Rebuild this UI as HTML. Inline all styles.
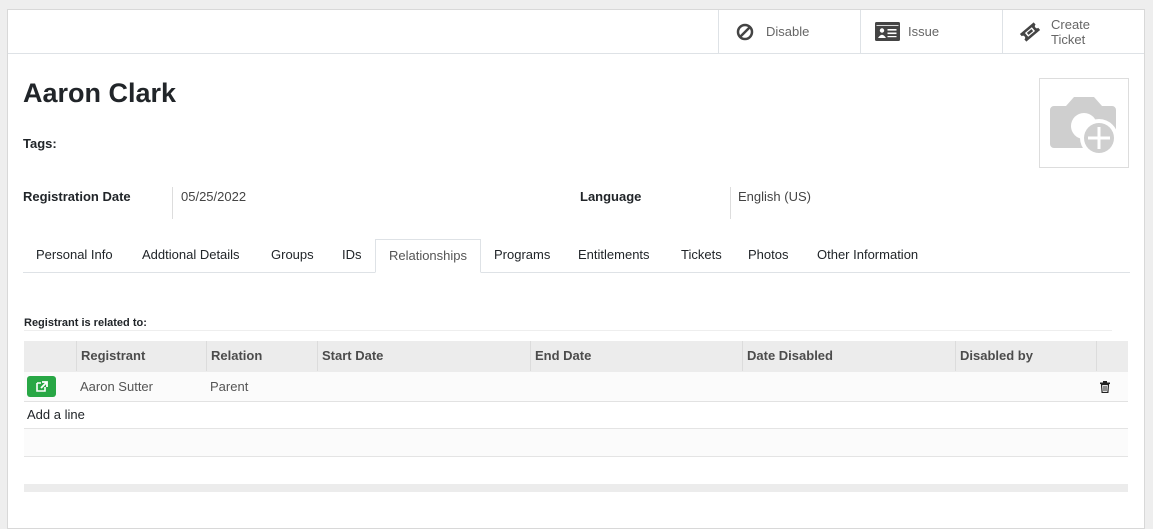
<!DOCTYPE html>
<html><head><style>
body{margin:0;width:1153px;height:519px;background:#eeeeee;font-family:"Liberation Sans",sans-serif;color:#212529;overflow:hidden;position:relative}
.card{position:absolute;left:7px;top:9px;width:1138px;height:520px;background:#fff;border:1px solid #d8d8d8;box-sizing:border-box}
.bar{position:absolute;left:0;top:0;width:1136px;height:43px;border-bottom:1px solid #dee2e6}
.btn{position:absolute;top:0;height:43px;border-left:1px solid #dee2e6;color:#666;font-size:13px;display:flex;align-items:center}
.abs{position:absolute}
.tabs{position:absolute;left:15px;top:229px;width:1107px;height:33px;border-bottom:1px solid #dee2e6}
.tab{position:absolute;top:0;height:33px;line-height:32px;font-size:13px;color:#212529}
.th{position:absolute;top:0;height:30px;line-height:30px;font-size:13px;font-weight:bold;color:#4c4c4c;border-left:1px solid #dcdcdc;padding-left:4px;box-sizing:border-box}
</style></head><body>
<div class="card">
 <div class="bar">
  <div class="btn" style="left:710px;width:142px"><svg style="margin-left:17px" width="18" height="18" viewBox="0 0 18 18"><circle cx="9" cy="9" r="7" fill="none" stroke="#444" stroke-width="2.5"/><line x1="4.5" y1="13.5" x2="13.5" y2="4.5" stroke="#444" stroke-width="2.5"/></svg><span style="margin-left:12px">Disable</span></div>
  <div class="btn" style="left:852px;width:142px"><svg style="margin-left:14px" width="25" height="19" viewBox="0 0 25 19"><rect x="0" y="0" width="25" height="19" rx="1.5" fill="#444"/><rect x="1.5" y="3" width="22" height="0.8" fill="#fff"/><circle cx="7" cy="8.5" r="2.2" fill="#fff"/><path d="M3 16 Q7 9.5 11 16Z" fill="#fff"/><rect x="12.5" y="7" width="9" height="1.6" fill="#fff"/><rect x="12.5" y="10.5" width="9" height="1.6" fill="#fff"/><rect x="12.5" y="14" width="9" height="1.2" fill="#fff"/></svg><span style="margin-left:8px">Issue</span></div>
  <div class="btn" style="left:994px;width:142px"><svg style="margin-left:16px" width="22" height="20" viewBox="0 0 22 20"><g transform="rotate(-40 11 10)"><path d="M2 5 h18 v3 a2 2 0 0 0 0 4 v3 h-18 v-3 a2 2 0 0 0 0 -4z" fill="#444"/><rect x="6.5" y="7.5" width="9" height="5" fill="#fff"/><rect x="8" y="8.7" width="6" height="2.6" fill="#444"/></g></svg><span style="margin-left:10px;line-height:15px">Create<br>Ticket</span></div>
 </div>
 <div class="abs" style="left:15px;top:68px;font-size:27px;font-weight:bold;color:#212529">Aaron Clark</div>
 <div class="abs" style="left:15px;top:126px;font-size:13px;font-weight:bold">Tags:</div>
 <div class="abs" style="left:1031px;top:68px;width:90px;height:90px;border:1px solid #ddd;box-sizing:border-box">
  <svg width="88" height="88" viewBox="0 0 88 88"><path d="M14 27 h12 l8 -9 h20 l8 9 h10 a4 4 0 0 1 4 4 v34 a4 4 0 0 1 -4 4 h-58 a4 4 0 0 1 -4 -4 v-34 a4 4 0 0 1 4 -4z" fill="#cfcfcf"/><circle cx="44" cy="47" r="13" fill="#fff"/><circle cx="59" cy="59" r="19" fill="#fff"/><circle cx="59" cy="59" r="15" fill="#cfcfcf"/><rect x="57.5" y="48" width="3" height="22" fill="#fff"/><rect x="48" y="57.5" width="22" height="3" fill="#fff"/></svg>
 </div>
 <div class="abs" style="left:15px;top:179px;font-size:13px;font-weight:bold">Registration Date</div>
 <div class="abs" style="left:164px;top:177px;height:32px;border-left:1px solid #ddd"></div>
 <div class="abs" style="left:173px;top:179px;font-size:13px;color:#444">05/25/2022</div>
 <div class="abs" style="left:572px;top:179px;font-size:13px;font-weight:bold">Language</div>
 <div class="abs" style="left:722px;top:177px;height:32px;border-left:1px solid #ddd"></div>
 <div class="abs" style="left:730px;top:179px;font-size:13px;color:#444">English (US)</div>
 <div class="tabs">
  <div class="tab" style="left:13px">Personal Info</div>
  <div class="tab" style="left:119px">Addtional Details</div>
  <div class="tab" style="left:248px">Groups</div>
  <div class="tab" style="left:319px">IDs</div>
  <div class="tab" style="left:352px;top:0;width:106px;height:34px;border:1px solid #dee2e6;border-bottom:1px solid #fff;background:#fff;color:#555;text-align:center;box-sizing:border-box">Relationships</div>
  <div class="tab" style="left:471px">Programs</div>
  <div class="tab" style="left:555px">Entitlements</div>
  <div class="tab" style="left:658px">Tickets</div>
  <div class="tab" style="left:725px">Photos</div>
  <div class="tab" style="left:794px">Other Information</div>
 </div>
 <div class="abs" style="left:16px;top:307px;font-size:11px;font-weight:bold">Registrant is related to:</div>
 <div class="abs" style="left:16px;top:320px;width:1088px;border-top:1px solid #eee"></div>
 <div class="abs" style="left:16px;top:331px;width:1104px;height:31px;background:#ececec;border-bottom:1px solid #dcdcdc">
  <div class="th" style="left:0;border-left:0;width:52px"></div>
  <div class="th" style="left:52px;width:130px">Registrant</div>
  <div class="th" style="left:182px;width:111px">Relation</div>
  <div class="th" style="left:293px;width:213px">Start Date</div>
  <div class="th" style="left:506px;width:212px">End Date</div>
  <div class="th" style="left:718px;width:213px">Date Disabled</div>
  <div class="th" style="left:931px;width:141px">Disabled by</div>
  <div class="th" style="left:1072px;width:32px"></div>
 </div>
 <div class="abs" style="left:16px;top:362px;width:1104px;height:29px;background:#fbfbfb;border-bottom:1px solid #e2e2e2;font-size:13px;color:#555">
  <div class="abs" style="left:3px;top:4px;width:29px;height:21px;background:#28a745;border-radius:3px"><svg width="29" height="21" viewBox="0 0 29 21"><path d="M10 7 h4 M10 7 v8 h8 v-4" fill="none" stroke="#fff" stroke-width="1.6"/><path d="M15 6 h5 v5 M20 6 l-6 6" fill="none" stroke="#fff" stroke-width="1.8"/></svg></div>
  <div class="abs" style="left:56px;top:7px">Aaron Sutter</div>
  <div class="abs" style="left:186px;top:7px">Parent</div>
  <svg class="abs" style="left:1076px;top:9px" width="10" height="12" viewBox="0 0 10 12"><rect x="0" y="1.5" width="10" height="1.5" fill="#222"/><rect x="3" y="0" width="4" height="2" fill="#222"/><path d="M1.5 3.5 h7 l-0.6 8 h-5.8z" fill="none" stroke="#222" stroke-width="1.2"/><path d="M4 5v5M6 5v5" stroke="#222"/></svg>
 </div>
 <div class="abs" style="left:19px;top:397px;font-size:13px;color:#212529">Add a line</div>
 <div class="abs" style="left:16px;top:418px;width:1104px;height:27px;background:#fbfbfb;border-top:1px solid #e4e4e4;border-bottom:1px solid #e4e4e4"></div>
 <div class="abs" style="left:16px;top:474px;width:1104px;height:8px;background:#ececec"></div>
</div>
</body></html>
